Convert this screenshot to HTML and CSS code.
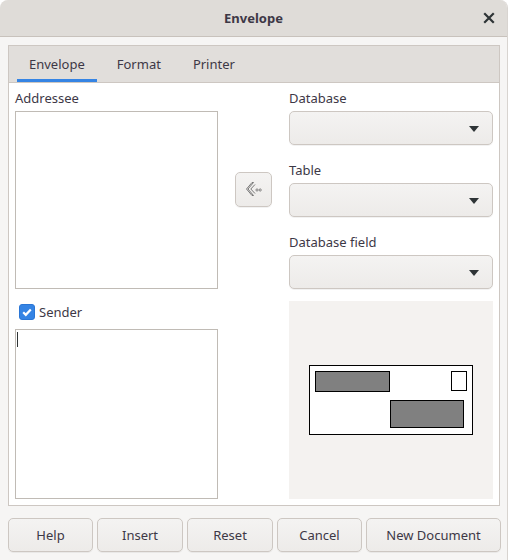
FILE: index.html
```html
<!DOCTYPE html>
<html>
<head>
<meta charset="utf-8">
<link rel="stylesheet" href="styles.css">
</head>
<body>
<div class="window">
  <div class="titlebar">
    <span class="title">Envelope</span>
    <span class="close">
      <svg width="12" height="12" viewBox="0 0 12 12"><path d="M2 2 L10 10 M10 2 L2 10" stroke="#2e3436" stroke-width="2.2" stroke-linecap="square"/></svg>
    </span>
  </div>
  <div class="main">
    <div class="notebook">
      <div class="tabs">
        <div class="tab active">Envelope</div>
        <div class="tab">Format</div>
        <div class="tab">Printer</div>
      </div>
      <div class="page">
        <div class="grid">
          <div class="cell-addressee">
            <div class="label">Addressee</div>
            <div class="textbox addressee"></div>
          </div>
          <div class="cell-mid">
            <button class="btn icon-btn">
              <svg width="18" height="18" viewBox="0 0 18 18">
                <path d="M7 2.5 L1.5 9 L7 15.5 L8.5 15.5 L3 9 L8.5 2.5 Z" fill="none" stroke="#6b6b6b" stroke-width="0.9" stroke-linejoin="round"/>
                <path d="M10 4.5 L5.8 9 L10 13.5" fill="none" stroke="#6b6b6b" stroke-width="0.9"/>
                <circle cx="12" cy="10" r="1.1" fill="none" stroke="#6b6b6b" stroke-width="0.8"/>
                <circle cx="15.2" cy="10" r="1.1" fill="none" stroke="#6b6b6b" stroke-width="0.8"/>
              </svg>
            </button>
          </div>
          <div class="cell-db">
            <div class="group">
              <div class="label">Database</div>
              <div class="combo"><span class="arrow"></span></div>
            </div>
            <div class="group">
              <div class="label">Table</div>
              <div class="combo"><span class="arrow"></span></div>
            </div>
            <div class="group">
              <div class="label">Database field</div>
              <div class="combo"><span class="arrow"></span></div>
            </div>
          </div>
          <div class="cell-sender">
            <label class="check-row">
              <span class="checkbox">
                <svg width="12" height="12" viewBox="0 0 12 12"><path d="M2.2 6.2 L4.8 8.8 L9.8 3.4" fill="none" stroke="#ffffff" stroke-width="2.2"/></svg>
              </span>
              <span class="check-label">Sender</span>
            </label>
            <div class="textbox sender"><span class="caret"></span></div>
          </div>
          <div class="cell-preview">
            <div class="preview">
              <div class="envelope">
                <div class="env-top">
                  <div class="env-sender"></div>
                  <div class="env-stamp"></div>
                </div>
                <div class="env-addr"></div>
              </div>
            </div>
          </div>
        </div>
      </div>
    </div>
    <div class="buttons">
      <button class="btn">Help</button>
      <button class="btn">Insert</button>
      <button class="btn">Reset</button>
      <button class="btn">Cancel</button>
      <button class="btn">New Document</button>
    </div>
  </div>
</div>
</body>
</html>
```

FILE: styles.css
```css
* { box-sizing: border-box; }
html, body {
  margin: 0;
  padding: 0;
  background: #ffffff;
}
body {
  width: 508px;
  height: 560px;
  overflow: hidden;
  font-family: "Noto Sans", "DejaVu Sans", sans-serif;
  font-size: 13px;
  color: #3d3846;
}
.window {
  width: 508px;
  height: 560px;
  background: #f6f5f4;
  border-radius: 8px 8px 0 0;
  overflow: hidden;
  border-right: 1px solid #d8d4d0;
}
.titlebar {
  height: 37px;
  background: #dfdcd8;
  border-bottom: 1px solid #c8c2bc;
  display: flex;
  align-items: center;
  justify-content: center;
  position: relative;
}
.title {
  font-weight: bold;
  color: #3d3846;
  font-size: 13px;
}
.close {
  position: absolute;
  right: 12px;
  top: 12px;
  width: 12px;
  height: 12px;
  display: flex;
}
.main {
  padding: 8px 7px 0 8px;
}
.notebook {
  border: 1px solid #cdc7c2;
  height: 461px;
  display: flex;
  flex-direction: column;
}
.tabs {
  height: 37px;
  background: #e1dedb;
  border-bottom: 1px solid #cdc7c2;
  display: flex;
  padding-left: 8px;
  gap: 8px;
}
.tab {
  height: 36px;
  padding: 0 12px;
  display: flex;
  align-items: center;
  color: #3d3846;
  border-bottom: 3px solid transparent;
  padding-top: 3px;
}
.tab.active {
  border-bottom-color: #3584e4;
}
.page {
  flex: 1;
  background: #ffffff;
  padding: 6px 5px 6px 6px;
}
.grid {
  display: grid;
  grid-template-columns: 203px 37px 204px;
  grid-template-rows: 200px 210px;
  column-gap: 17px;
}
.cell-addressee { grid-column: 1; grid-row: 1; }
.cell-mid { grid-column: 2; grid-row: 1; }
.cell-db { grid-column: 3; grid-row: 1; }
.cell-sender { grid-column: 1; grid-row: 2; }
.cell-preview { grid-column: 3; grid-row: 2; }
.label {
  height: 18px;
  line-height: 18px;
  margin-bottom: 4px;
  color: #3d3846;
}
.textbox {
  border: 1px solid #c0bbb5;
  background: #ffffff;
  width: 203px;
}
.textbox.addressee { height: 178px; }
.textbox.sender {
  height: 170px;
  position: relative;
}
.caret {
  position: absolute;
  left: 1px;
  top: 2px;
  width: 1px;
  height: 15px;
  background: #2e3436;
}
.cell-mid {
  display: flex;
  align-items: center;
  justify-content: center;
}
.btn {
  font-family: inherit;
  font-size: 13px;
  color: #3d3846;
  background: linear-gradient(#f4f3f2, #edebe9);
  border: 1px solid #cdc7c2;
  border-radius: 5px;
  box-shadow: 0 1px 0 rgba(0,0,0,0.05);
  padding: 0;
}
.icon-btn {
  width: 37px;
  height: 35px;
  display: flex;
  align-items: center;
  justify-content: center;
}
.cell-db {
  display: flex;
  flex-direction: column;
  gap: 16px;
}
.combo {
  height: 34px;
  border: 1px solid #cdc7c2;
  border-radius: 5px;
  background: linear-gradient(#f4f3f2, #edebe9);
  box-shadow: 0 1px 0 rgba(0,0,0,0.05);
  display: flex;
  align-items: center;
  justify-content: flex-end;
  padding-right: 13px;
}
.arrow {
  width: 0;
  height: 0;
  border-left: 5px solid transparent;
  border-right: 5px solid transparent;
  border-top: 6px solid #2e3436;
  margin-top: 1px;
}
.check-row {
  display: flex;
  align-items: center;
  height: 24px;
  margin: 11px 0 5px 4px;
}
.checkbox {
  width: 16px;
  height: 16px;
  border-radius: 3px;
  background: #3584e4;
  border: 1px solid #2a76d6;
  display: flex;
  align-items: center;
  justify-content: center;
}
.check-label {
  margin-left: 4px;
  color: #3d3846;
}
.cell-preview {
  padding-top: 12px;
}
.preview {
  height: 198px;
  background: #f4f2f0;
  display: flex;
  align-items: center;
  justify-content: center;
}
.envelope {
  width: 164px;
  height: 70px;
  border: 1px solid #000000;
  background: #ffffff;
  margin-top: -1px;
  padding: 5px 5px 0 5px;
}
.env-top {
  display: flex;
  justify-content: space-between;
}
.env-sender {
  width: 75px;
  height: 21px;
  background: #808080;
  border: 1px solid #000000;
}
.env-stamp {
  width: 16px;
  height: 20px;
  border: 1px solid #000000;
  background: #ffffff;
}
.env-addr {
  width: 74px;
  height: 28px;
  background: #808080;
  border: 1px solid #000000;
  margin-left: 75px;
  margin-top: 8px;
}
.buttons {
  display: grid;
  grid-template-columns: 85px 86px 86px 85px 135px;
  column-gap: 4px;
  margin-top: 12px;
  width: 493px;
}
.buttons .btn {
  height: 34px;
}
```
